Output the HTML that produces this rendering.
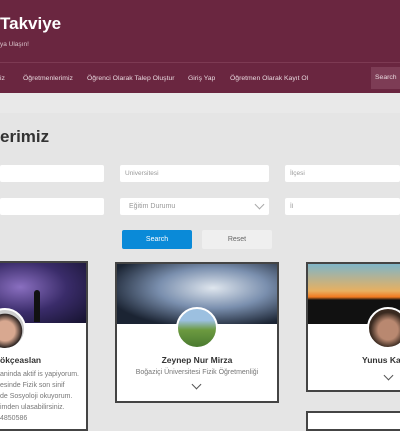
<!DOCTYPE html>
<html><head><meta charset="utf-8"><style>
*{margin:0;padding:0;box-sizing:border-box}
body{width:400px;height:420px;overflow:hidden;background:#e5e5e5;font-family:"Liberation Sans",sans-serif;position:relative}
.a{position:absolute}
.hdr{left:0;top:0;width:400px;height:93px;background:#6a2640}
.nav{color:#e8d8de;font-size:6.8px;top:75px;white-space:nowrap}
.in{background:#fff;height:17px;font-size:6.5px;color:#999;padding:5px 5px;border-radius:2px}
.card{background:#fff;border:2px solid #444;overflow:hidden}
.av{border-radius:50%;border:2px solid #fff;width:42px;height:42px}
.nm{font-weight:bold;font-size:8.5px;color:#333;text-align:center;white-space:nowrap}
.sub{font-size:7px;color:#777;text-align:center;white-space:nowrap}
.chev{width:7px;height:7px;border-right:1.5px solid #555;border-bottom:1.5px solid #555;transform:rotate(45deg)}
</style></head><body>
<div class="a hdr"></div>
<div class="a" style="left:0;top:62px;width:400px;height:1px;background:#7d3a53"></div>
<div class="a" style="left:0;top:14px;color:#fff;font-size:17px;font-weight:bold">Takviye</div>
<div class="a" style="left:0;top:41px;color:#d9c3cb;font-size:6.5px">ya Ulaşın!</div>
<div class="a nav" style="left:0">iz</div>
<div class="a nav" style="left:23px">Öğretmenlerimiz</div>
<div class="a nav" style="left:87px">Öğrenci Olarak Talep Oluştur</div>
<div class="a nav" style="left:188px">Giriş Yap</div>
<div class="a nav" style="left:230px">Öğretmen Olarak Kayıt Ol</div>
<div class="a" style="left:371px;top:67px;width:29px;height:22px;background:#7d3c55;color:#e8d8de;font-size:6.8px;padding:7px 4px;white-space:nowrap;overflow:hidden">Search</div>
<div class="a" style="left:0;top:93px;width:400px;height:20px;background:#e9e9e9"></div>
<div class="a" style="left:0;top:127px;font-size:17px;font-weight:bold;color:#333">erimiz</div>
<div class="a in" style="left:0;top:165px;width:104px"></div>
<div class="a in" style="left:120px;top:165px;width:149px">Universitesi</div>
<div class="a in" style="left:285px;top:165px;width:115px">İlçesi</div>
<div class="a in" style="left:0;top:198px;width:104px"></div>
<div class="a in" style="left:120px;top:198px;width:149px;padding-left:9px;font-size:7px">Eğitim Durumu</div>
<div class="a chev" style="left:256px;top:201px;border-color:#aaa;border-width:1px"></div>
<div class="a in" style="left:285px;top:198px;width:115px">İl</div>
<div class="a" style="left:122px;top:230px;width:70px;height:19px;background:#0a8ad8;color:#fff;font-size:7px;text-align:center;line-height:19px;border-radius:2px">Search</div>
<div class="a" style="left:202px;top:230px;width:70px;height:19px;background:#efefef;color:#666;font-size:7px;text-align:center;line-height:19px;border-radius:2px">Reset</div>

<div class="a card" style="left:-10px;top:261px;width:98px;height:170px">
<div style="height:60px;background:radial-gradient(ellipse at 30% 40%,#8a6fc0,#3a2c6a 50%,#15122e)"></div>
</div>
<div class="a" style="left:34px;top:290px;width:6px;height:32px;background:#111;border-radius:3px 3px 0 0"></div>
<div class="a av" style="left:-16px;top:308px;background:radial-gradient(circle at 50% 55%,#d8a890 35%,#2a2220 60%,#ccc 62%)"></div>
<div class="a nm" style="left:0;top:355px">ökçeaslan</div>
<div class="a sub" style="left:0;top:369px;line-height:11px;text-align:left">aninda aktif is yapiyorum.<br>esinde Fizik son sinif<br>de Sosyoloji okuyorum.<br>imden ulasabilirsiniz.<br>4850586</div>

<div class="a card" style="left:115px;top:262px;width:164px;height:141px">
<div style="height:60px;background:radial-gradient(ellipse at 60% 40%,#dfe6ee,#7a8fae 40%,#1b2433 80%)"></div>
</div>
<div class="a av" style="left:176px;top:307px;background:linear-gradient(#9cc0e0 30%,#6c9a40 55%,#4a7a30)"></div>
<div class="a nm" style="left:115px;top:355px;width:164px">Zeynep Nur Mirza</div>
<div class="a sub" style="left:115px;top:369px;width:164px">Boğaziçi Üniversitesi Fizik Öğretmenliği</div>
<div class="a chev" style="left:193px;top:381px"></div>

<div class="a card" style="left:306px;top:262px;width:100px;height:130px">
<div style="height:60px;background:linear-gradient(#7fb5c8,#e8b060 45%,#f07a20 55%,#111 60%)"></div>
</div>
<div class="a av" style="left:367px;top:307px;background:radial-gradient(circle at 50% 55%,#b98870 35%,#3a2a20 62%)"></div>
<div class="a nm" style="left:362px;top:355px">Yunus Kar</div>
<div class="a chev" style="left:385px;top:372px"></div>
<div class="a card" style="left:306px;top:411px;width:100px;height:20px"></div>
</body></html>
